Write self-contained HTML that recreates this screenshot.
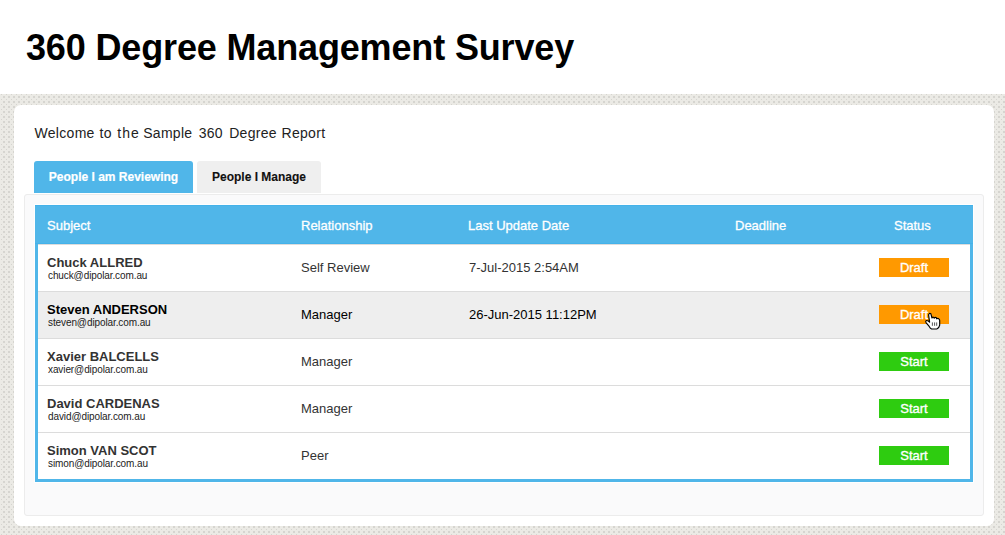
<!DOCTYPE html>
<html><head><meta charset="utf-8">
<style>
*{margin:0;padding:0;box-sizing:border-box}
html,body{width:1005px;height:535px;overflow:hidden;background:#fff;font-family:"Liberation Sans",sans-serif}
#hdr{position:absolute;left:0;top:0;width:1005px;height:94px;background:#fff}
#hdr h1{position:absolute;left:26px;top:28px;font-size:36px;line-height:40px;letter-spacing:-0.15px;font-weight:bold;color:#000;white-space:nowrap}
#bg{position:absolute;left:0;top:94px;width:1005px;height:441px}
#card{position:absolute;left:14px;top:105px;width:980px;height:421px;background:#fff;border-radius:7px}
#welcome{position:absolute;left:34px;top:125px;font-size:14px;line-height:16px;color:#222;white-space:nowrap;letter-spacing:0.3px}
#welcome span{position:absolute;top:0}
.tab{position:absolute;top:161px;height:32px;border-radius:3px 3px 0 0;font-size:12px;font-weight:bold;line-height:32px;text-align:center;white-space:nowrap;-webkit-text-stroke:0.2px currentColor}
#tab1{left:34px;width:159px;background:#50b6e9;color:#fff}
#tab2{left:197px;width:124px;background:#efefef;color:#111;-webkit-text-stroke:0.1px #111}
#panel{position:absolute;left:24px;top:194px;width:960px;height:322px;background:#fafafb;border:1px solid #ececec;border-radius:3px}
#tbl{position:absolute;left:35px;top:205px;width:938px;height:277px;border:3px solid #50b6e9;border-top:0;background:#fff;box-shadow:0 0 0 1px #fff}
#th{position:absolute;left:-3px;top:0;width:938px;height:39px;background:#50b6e9;border-top:1px solid #44b2ea;border-bottom:1px solid #44b2ea;color:#fff;font-size:13px}
#th span{position:absolute;top:12px;white-space:nowrap;-webkit-text-stroke:0.3px #fff}
.row{position:absolute;left:0;width:932px;height:47px;border-top:1px solid #dcdcdc;color:#333}
.row .nm{position:absolute;left:9px;top:10px;font-size:13px;font-weight:bold;white-space:nowrap;line-height:15px}
.row .em{position:absolute;left:10px;top:24px;font-size:10px;letter-spacing:-0.1px;white-space:nowrap;line-height:13px;color:#222}
.row .c2{position:absolute;left:263px;top:15px;font-size:13px;white-space:nowrap;line-height:16px}
.row .c3{position:absolute;left:431px;top:15px;font-size:13px;white-space:nowrap;line-height:16px}
.btn{position:absolute;left:841px;top:13px;width:70px;height:19px;color:#fff;font-size:13px;font-weight:normal;text-align:center;line-height:20px;-webkit-text-stroke:0.35px #fff}
.dr{background:#ff9900}
.st{background:#2ecc10}
</style></head><body>
<div id="hdr"><h1>360 Degree Management Survey</h1></div>
<svg id="bg" width="1005" height="441" shape-rendering="crispEdges"><defs><pattern id="pt" width="5" height="5" patternUnits="userSpaceOnUse"><rect width="5" height="5" fill="#ebeae5"/><rect x="1" y="0" width="1" height="1" fill="#d5d4cf"/><rect x="3" y="2" width="2" height="2" fill="#d6d5d0"/></pattern></defs><rect width="1005" height="441" fill="url(#pt)"/></svg>
<div id="card"></div>
<div id="welcome"><span style="left:0.5px">Welcome</span><span style="left:65.6px">to</span><span style="left:83.3px;letter-spacing:1px">the</span><span style="left:109.2px">Sample</span><span style="left:164.7px">360</span><span style="left:195.2px">Degree</span><span style="left:247.5px">Report</span></div>
<div class="tab" id="tab1">People I am Reviewing</div>
<div class="tab" id="tab2">People I Manage</div>
<div id="panel"></div>
<div id="tbl">
 <div id="th">
  <span style="left:12px">Subject</span>
  <span style="left:266px">Relationship</span>
  <span style="left:433px">Last Update Date</span>
  <span style="left:700px">Deadline</span>
  <span style="left:859px">Status</span>
 </div>
 <div class="row" style="top:39px"><div class="nm">Chuck ALLRED</div><div class="em">chuck@dipolar.com.au</div><div class="c2">Self Review</div><div class="c3">7-Jul-2015 2:54AM</div><div class="btn dr">Draft</div></div>
 <div class="row" style="top:86px;background:#eeeeee;color:#000"><div class="nm">Steven ANDERSON</div><div class="em">steven@dipolar.com.au</div><div class="c2">Manager</div><div class="c3">26-Jun-2015 11:12PM</div><div class="btn dr">Draft</div></div>
 <div class="row" style="top:133px"><div class="nm">Xavier BALCELLS</div><div class="em">xavier@dipolar.com.au</div><div class="c2">Manager</div><div class="btn st">Start</div></div>
 <div class="row" style="top:180px"><div class="nm">David CARDENAS</div><div class="em">david@dipolar.com.au</div><div class="c2">Manager</div><div class="btn st">Start</div></div>
 <div class="row" style="top:227px"><div class="nm">Simon VAN SCOT</div><div class="em">simon@dipolar.com.au</div><div class="c2">Peer</div><div class="btn st">Start</div></div>
</div>
<svg id="cur" width="35" height="35" viewBox="0 0 35 35" style="position:absolute;left:915px;top:300px">
<path d="M13.6 15 Q14.2 12.6 15.9 13.8 L17 18 Q17.6 16.8 18.8 17.4 L19.2 18.2 Q20.2 16.9 21.4 17.8 L21.7 18.8 Q22.9 17.9 23.9 18.9 Q24.8 19.5 24.7 20.6 L24.7 25.2 Q24.2 28 21.8 29 L16.6 29 Q15.2 28.3 14.2 26.4 L11.2 22.8 Q10.1 21 11.6 20.5 Q13 20.3 14.6 22.2 Z" fill="#fff" stroke="#000" stroke-width="1.15" stroke-linejoin="round"/>
<path d="M17.4 22.4 V25.8 M19.6 22.4 V25.8 M21.7 22.4 V25.8" stroke="#444" stroke-width="0.9"/>
</svg>
</body></html>
